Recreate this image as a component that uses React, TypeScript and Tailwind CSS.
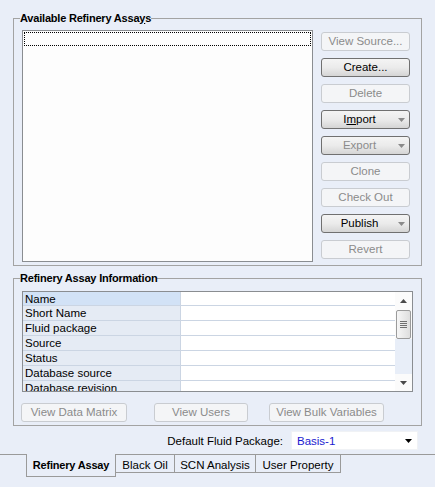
import React from "react";

const FONT = { fontFamily: '"Liberation Sans", Arial, sans-serif' };

function Arrow({ color = "#8a8a8a" }: { color?: string }) {
  return (
    <svg width="7" height="4" viewBox="0 0 7 4" className="block">
      <path d="M0 0 H7 L3.5 4 Z" fill={color} />
    </svg>
  );
}

function SideButton({
  label,
  enabled = false,
  dim = false,
  menu = false,
}: {
  label: React.ReactNode;
  enabled?: boolean;
  dim?: boolean;
  menu?: boolean;
}) {
  const frame = enabled
    ? "border-[#707070] bg-gradient-to-b from-[#f4f4f4] via-[#ebebeb] to-[#d5d5d5]"
    : "border-[#c9ccd1] bg-[#f4f5f7]";
  const text = enabled && !dim ? "text-black" : "text-[#8b8b8b]";
  return (
    <div className={`flex h-[19px] w-[89px] items-center rounded-[3px] border ${frame}`}>
      <span className={`flex-1 text-center text-[11.5px] leading-[17px] ${text}`}>{label}</span>
      {menu && (
        <span className="flex w-[12px] justify-center pr-[4px]">
          <Arrow />
        </span>
      )}
    </div>
  );
}

function LowerButton({ label, w }: { label: string; w: string }) {
  return (
    <div
      className={`flex h-[19px] ${w} items-center justify-center rounded-[3px] border border-[#c9ccd1] bg-[#f4f5f7] text-[11.5px] leading-[17px] text-[#8b8b8b]`}
    >
      {label}
    </div>
  );
}

const rows = [
  "Name",
  "Short Name",
  "Fluid package",
  "Source",
  "Status",
  "Database source",
  "Database revision",
];

export default function App() {
  return (
    <div className="h-[487px] w-[435px] overflow-hidden bg-[#e9eef8] text-black" style={FONT}>
      <div className="pl-[13px] pt-[11px]">
        {/* Available Refinery Assays */}
        <fieldset className="w-[409px] border border-[#a3a3a3]">
          <legend className="ml-[6px] text-[11px] font-bold leading-[14px] tracking-[-0.2px]">
            Available Refinery Assa<span className="underline">y</span>s
          </legend>
          <div className="flex pb-[3px] pl-[8px] pt-[5px]">
            <div className="h-[232px] w-[291px] border border-[#8a8d91] bg-[#fdfdfd] px-[1px] pt-[1px]">
              <div className="h-[14px] border border-dotted border-black" />
            </div>
            <div className="ml-[8px] flex flex-col gap-[7px] pt-[2px]">
              <SideButton label="View Source..." />
              <SideButton label="Create..." enabled />
              <SideButton label="Delete" />
              <SideButton
                label={
                  <>
                    I<span className="underline">m</span>port
                  </>
                }
                enabled
                menu
              />
              <SideButton label="Export" enabled dim menu />
              <SideButton label="Clone" />
              <SideButton label="Check Out" />
              <SideButton label="Publish" enabled menu />
              <SideButton label="Revert" />
            </div>
          </div>
        </fieldset>

        {/* Refinery Assay Information */}
        <fieldset className="mt-[5px] w-[409px] border border-[#a3a3a3]">
          <legend className="ml-[6px] text-[11px] font-bold leading-[14px] tracking-[-0.2px]">
            Refinery Assay Information
          </legend>
          <div className="pb-[3px] pl-[8px] pt-[6px]">
            <div className="flex h-[101px] w-[391px] overflow-hidden border border-[#8a8d91] bg-white">
              <div className="flex-1">
                {rows.map((r, i) => (
                  <div
                    key={r}
                    className={`flex ${i === 0 ? "h-[14px]" : "h-[15px]"} border-b border-[#cbd5e3]`}
                  >
                    <div
                      className={`w-[158px] shrink-0 border-r border-[#cbd5e3] pl-[2px] text-[11.5px] leading-[14px] ${
                        i === 0 ? "bg-[#d2e2f6]" : "bg-[#e5ebf4]"
                      }`}
                    >
                      {r}
                    </div>
                    <div className="flex-1 bg-white" />
                  </div>
                ))}
              </div>
              <div className="flex w-[17px] flex-col bg-[#fbfbfb]">
                <div className="flex h-[18px] items-center justify-center">
                  <svg width="7" height="4" viewBox="0 0 7 4" className="block">
                    <path d="M0 4 H7 L3.5 0 Z" fill="#4a4a4a" />
                  </svg>
                </div>
                <div className="mx-[1px] flex h-[29px] flex-col items-center justify-center gap-[1px] rounded-[2px] border border-[#9b9b9b] bg-gradient-to-r from-[#f6f6f6] to-[#dedede]">
                  <div className="h-[1px] w-[7px] bg-[#6f6f6f]" />
                  <div className="h-[1px] w-[7px] bg-[#6f6f6f]" />
                  <div className="h-[1px] w-[7px] bg-[#6f6f6f]" />
                  <div className="h-[1px] w-[7px] bg-[#6f6f6f]" />
                </div>
                <div className="h-[35px] bg-[#e8eef8]" />
                <div className="flex h-[17px] items-center justify-center">
                  <Arrow color="#4a4a4a" />
                </div>
              </div>
            </div>
            <div className="ml-[-1px] mt-[11px] flex">
              <LowerButton label="View Data Matrix" w="w-[106px]" />
              <div className="ml-[27px]">
                <LowerButton label="View Users" w="w-[94px]" />
              </div>
              <div className="ml-[21px]">
                <LowerButton label="View Bulk Variables" w="w-[115px]" />
              </div>
            </div>
          </div>
        </fieldset>

        {/* Default Fluid Package */}
        <div className="mt-[5px] flex w-[405px] items-center justify-end gap-[8px]">
          <span className="text-[11.5px] leading-[14px]">Default Fluid Package:</span>
          <div className="flex h-[19px] w-[127px] items-center border border-[#f0f2f5] bg-white pl-[5px] pr-[5px]">
            <span className="flex-1 text-[11.5px] leading-[14px] text-[#1a1ad0]">Basis-1</span>
            <Arrow color="#000000" />
          </div>
        </div>
      </div>

      {/* Tabs */}
      <div className="mt-[4px] flex items-start">
        <div className="h-[1px] w-[26px] bg-[#9a9a9a]" />
        <div className="h-[23px] w-[90px] border-x border-b border-[#9a9a9a] pt-[5px] text-center text-[11px] font-bold leading-[13px] tracking-[-0.2px]">
          Refinery Assay
        </div>
        <div className="h-[19px] w-[59px] border-y border-r border-[#9a9a9a] pt-[4px] text-center text-[11.5px] leading-[13px]">
          Black Oil
        </div>
        <div className="h-[19px] w-[81px] border-y border-r border-[#9a9a9a] pt-[4px] text-center text-[11.5px] leading-[13px]">
          SCN Analysis
        </div>
        <div className="h-[19px] w-[85px] border-y border-r border-[#9a9a9a] pt-[4px] text-center text-[11.5px] leading-[13px]">
          User Property
        </div>
        <div className="h-[1px] flex-1 bg-[#9a9a9a]" />
      </div>
    </div>
  );
}
